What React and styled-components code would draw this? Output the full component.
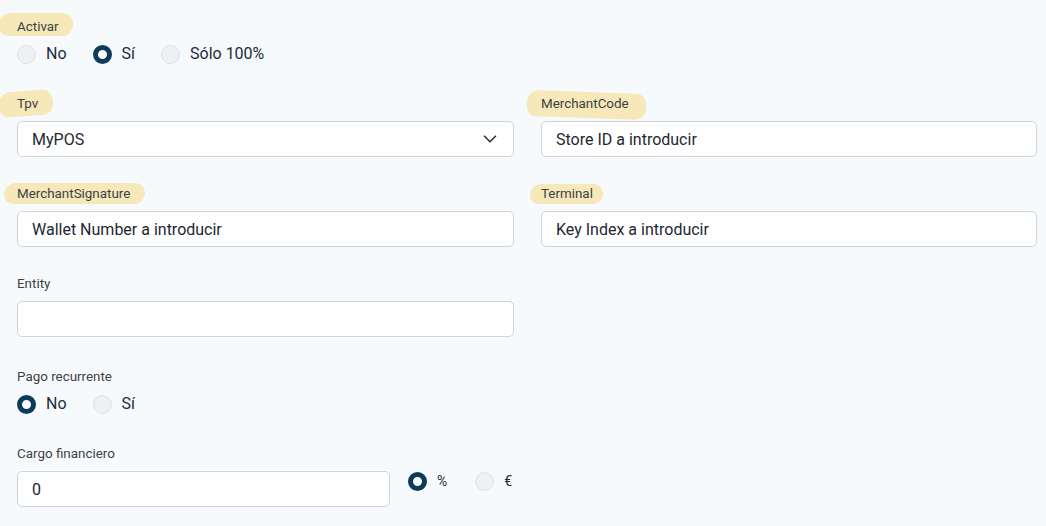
import React, { useState } from "react";
import styled, { createGlobalStyle } from "styled-components";
import { ChevronDown } from "lucide-react";

const GlobalStyle = createGlobalStyle`
  html, body {
    margin: 0;
    padding: 0;
    background: #f7fafd;
    font-family: Roboto, "Liberation Sans", Arial, sans-serif;
  }
  * { box-sizing: border-box; }
`;

// Styled Components
const Page = styled.div`
  padding: 18px 9px 20px 17px;
`;

const Section = styled.div`
  margin-top: ${(p) => p.top || 0}px;
`;

const Label = styled.div`
  position: relative;
  width: fit-content;
  padding-top: 1px;
  font-size: 13.4px;
  line-height: 16px;
  color: #3b4147;
  margin-bottom: 9px;
  z-index: 0;

  &::before {
    content: "";
    display: ${(p) => (p.marked ? "block" : "none")};
    position: absolute;
    z-index: -1;
    left: ${(p) => p.l ?? -14}px;
    right: ${(p) => p.r ?? -15}px;
    top: ${(p) => p.t ?? -4}px;
    bottom: ${(p) => p.b ?? -2}px;
    background: #f6e8b8;
    border-radius: 12px 10px 11px 9px;
    transform: rotate(${(p) => p.tilt ?? 0}deg);
  }
`;

const Grid = styled.div`
  display: grid;
  grid-template-columns: 497px 496px;
  column-gap: 27px;
  row-gap: 28px;
`;

const Field = styled.div`
  display: flex;
  flex-direction: column;
  align-items: flex-start;
`;

const Input = styled.input`
  display: block;
  width: ${(p) => p.w || "100%"};
  height: 36px;
  padding: 0 14px;
  border: 1px solid #cfd4da;
  border-radius: 5px;
  background: #fff;
  font-family: inherit;
  font-size: 16px;
  color: #1e2733;
  outline: none;
`;

const SelectBox = styled.div`
  width: 100%;
  height: 36px;
  padding: 0 12px 0 14px;
  border: 1px solid #cfd4da;
  border-radius: 5px;
  background: #fff;
  display: flex;
  align-items: center;
  justify-content: space-between;
  font-size: 16px;
  color: #1e2733;
  cursor: pointer;
`;

const RadioRow = styled.div`
  display: flex;
  align-items: center;
  gap: 26px;
  height: 20px;
`;

const Option = styled.label`
  display: flex;
  align-items: center;
  gap: 10px;
  font-size: ${(p) => p.size || 16}px;
  color: #1d2b3a;
  cursor: pointer;
  line-height: 20px;
`;

const Dot = styled.span`
  width: 19px;
  height: 19px;
  border-radius: 50%;
  flex: none;
  background: ${(p) => (p.on ? "#fff" : "#eef0f3")};
  border: ${(p) => (p.on ? "5px solid #0d3b5a" : "1px solid #dde1e6")};
`;

const Inline = styled.div`
  display: flex;
  align-items: flex-start;
  gap: 18px;
`;

const Units = styled(RadioRow)`
  gap: 28px;
`;

const Radios = ({ options, value, onChange, size }) => (
  <>
    {options.map((o) => (
      <Option key={o} size={size} onClick={() => onChange(o)}>
        <Dot on={value === o} />
        {o}
      </Option>
    ))}
  </>
);

const App = () => {
  const [activar, setActivar] = useState("Sí");
  const [recurrente, setRecurrente] = useState("No");
  const [unidad, setUnidad] = useState("%");

  return (
    <Page>
      <GlobalStyle />
      <Section>
        <Label marked l={-18} r={-14} t={-5} b={-1}>
          Activar
        </Label>
        <RadioRow>
          <Radios options={["No", "Sí", "Sólo 100%"]} value={activar} onChange={setActivar} />
        </RadioRow>
      </Section>

      <Section top={31}>
        <Grid>
          <Field>
            <Label marked l={-18} r={-15} t={-4} b={-4} tilt={-4}>
              Tpv
            </Label>
            <SelectBox>
              MyPOS
              <ChevronDown size={22} strokeWidth={1.8} color="#2f3640" />
            </SelectBox>
          </Field>
          <Field>
            <Label marked l={-14} r={-17} t={-3} b={-6} tilt={2}>
              MerchantCode
            </Label>
            <Input defaultValue="Store ID a introducir" />
          </Field>
          <Field>
            <Label marked l={-13} r={-15} t={-2} b={-2}>
              MerchantSignature
            </Label>
            <Input defaultValue="Wallet Number a introducir" />
          </Field>
          <Field>
            <Label marked l={-11} r={-10} t={-1} b={-2}>
              Terminal
            </Label>
            <Input defaultValue="Key Index a introducir" />
          </Field>
          <Field>
            <Label>Entity</Label>
            <Input defaultValue="" />
          </Field>
        </Grid>
      </Section>

      <Section top={31}>
        <Label>Pago recurrente</Label>
        <RadioRow>
          <Radios options={["No", "Sí"]} value={recurrente} onChange={setRecurrente} />
        </RadioRow>
      </Section>

      <Section top={31}>
        <Label>Cargo financiero</Label>
        <Inline>
          <Input w="373px" defaultValue="0" />
          <Units>
            <Radios options={["%", "€"]} value={unidad} onChange={setUnidad} size={14} />
          </Units>
        </Inline>
      </Section>
    </Page>
  );
};

export default App;
